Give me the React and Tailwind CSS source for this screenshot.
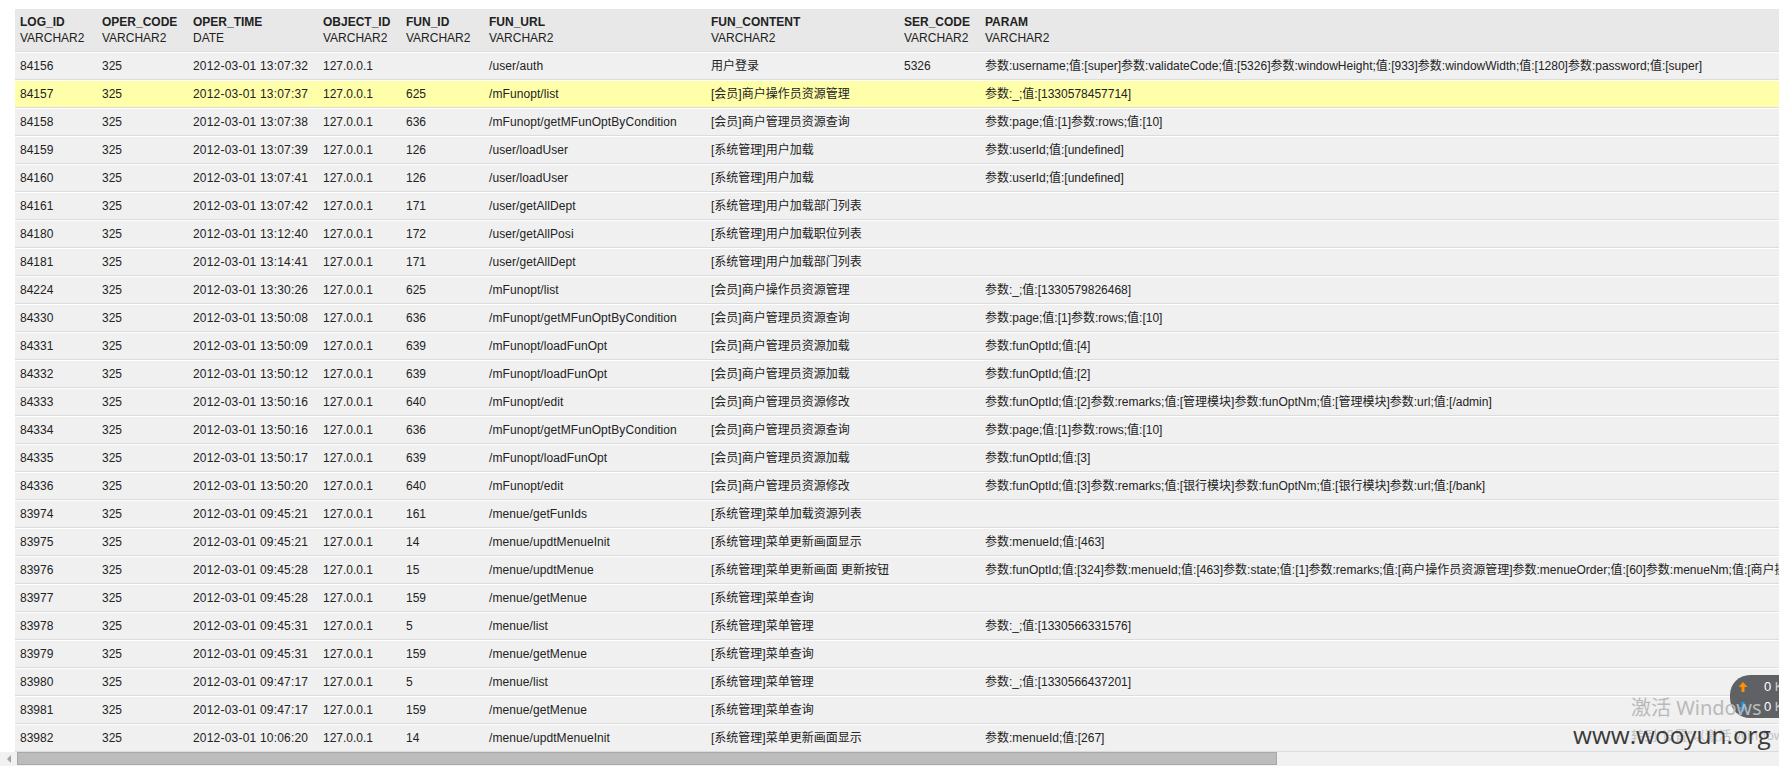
import React from 'react';

const columns = [
  { name: 'LOG_ID', type: 'VARCHAR2', width: 'w-[82px]' },
  { name: 'OPER_CODE', type: 'VARCHAR2', width: 'w-[91px]' },
  { name: 'OPER_TIME', type: 'DATE', width: 'w-[130px]' },
  { name: 'OBJECT_ID', type: 'VARCHAR2', width: 'w-[83px]' },
  { name: 'FUN_ID', type: 'VARCHAR2', width: 'w-[83px]' },
  { name: 'FUN_URL', type: 'VARCHAR2', width: 'w-[222px]' },
  { name: 'FUN_CONTENT', type: 'VARCHAR2', width: 'w-[193px]' },
  { name: 'SER_CODE', type: 'VARCHAR2', width: 'w-[81px]' },
  { name: 'PARAM', type: 'VARCHAR2', width: 'w-[1000px]' },
];

const rows = [
  ['84156', '325', '2012-03-01 13:07:32', '127.0.0.1', '', '/user/auth', '用户登录', '5326', '参数:username;值:[super]参数:validateCode;值:[5326]参数:windowHeight;值:[933]参数:windowWidth;值:[1280]参数:password;值:[super]'],
  ['84157', '325', '2012-03-01 13:07:37', '127.0.0.1', '625', '/mFunopt/list', '[会员]商户操作员资源管理', '', '参数:_;值:[1330578457714]'],
  ['84158', '325', '2012-03-01 13:07:38', '127.0.0.1', '636', '/mFunopt/getMFunOptByCondition', '[会员]商户管理员资源查询', '', '参数:page;值:[1]参数:rows;值:[10]'],
  ['84159', '325', '2012-03-01 13:07:39', '127.0.0.1', '126', '/user/loadUser', '[系统管理]用户加载', '', '参数:userId;值:[undefined]'],
  ['84160', '325', '2012-03-01 13:07:41', '127.0.0.1', '126', '/user/loadUser', '[系统管理]用户加载', '', '参数:userId;值:[undefined]'],
  ['84161', '325', '2012-03-01 13:07:42', '127.0.0.1', '171', '/user/getAllDept', '[系统管理]用户加载部门列表', '', ''],
  ['84180', '325', '2012-03-01 13:12:40', '127.0.0.1', '172', '/user/getAllPosi', '[系统管理]用户加载职位列表', '', ''],
  ['84181', '325', '2012-03-01 13:14:41', '127.0.0.1', '171', '/user/getAllDept', '[系统管理]用户加载部门列表', '', ''],
  ['84224', '325', '2012-03-01 13:30:26', '127.0.0.1', '625', '/mFunopt/list', '[会员]商户操作员资源管理', '', '参数:_;值:[1330579826468]'],
  ['84330', '325', '2012-03-01 13:50:08', '127.0.0.1', '636', '/mFunopt/getMFunOptByCondition', '[会员]商户管理员资源查询', '', '参数:page;值:[1]参数:rows;值:[10]'],
  ['84331', '325', '2012-03-01 13:50:09', '127.0.0.1', '639', '/mFunopt/loadFunOpt', '[会员]商户管理员资源加载', '', '参数:funOptId;值:[4]'],
  ['84332', '325', '2012-03-01 13:50:12', '127.0.0.1', '639', '/mFunopt/loadFunOpt', '[会员]商户管理员资源加载', '', '参数:funOptId;值:[2]'],
  ['84333', '325', '2012-03-01 13:50:16', '127.0.0.1', '640', '/mFunopt/edit', '[会员]商户管理员资源修改', '', '参数:funOptId;值:[2]参数:remarks;值:[管理模块]参数:funOptNm;值:[管理模块]参数:url;值:[/admin]'],
  ['84334', '325', '2012-03-01 13:50:16', '127.0.0.1', '636', '/mFunopt/getMFunOptByCondition', '[会员]商户管理员资源查询', '', '参数:page;值:[1]参数:rows;值:[10]'],
  ['84335', '325', '2012-03-01 13:50:17', '127.0.0.1', '639', '/mFunopt/loadFunOpt', '[会员]商户管理员资源加载', '', '参数:funOptId;值:[3]'],
  ['84336', '325', '2012-03-01 13:50:20', '127.0.0.1', '640', '/mFunopt/edit', '[会员]商户管理员资源修改', '', '参数:funOptId;值:[3]参数:remarks;值:[银行模块]参数:funOptNm;值:[银行模块]参数:url;值:[/bank]'],
  ['83974', '325', '2012-03-01 09:45:21', '127.0.0.1', '161', '/menue/getFunIds', '[系统管理]菜单加载资源列表', '', ''],
  ['83975', '325', '2012-03-01 09:45:21', '127.0.0.1', '14', '/menue/updtMenueInit', '[系统管理]菜单更新画面显示', '', '参数:menueId;值:[463]'],
  ['83976', '325', '2012-03-01 09:45:28', '127.0.0.1', '15', '/menue/updtMenue', '[系统管理]菜单更新画面 更新按钮', '', '参数:funOptId;值:[324]参数:menueId;值:[463]参数:state;值:[1]参数:remarks;值:[商户操作员资源管理]参数:menueOrder;值:[60]参数:menueNm;值:[商户操作员资源管理]'],
  ['83977', '325', '2012-03-01 09:45:28', '127.0.0.1', '159', '/menue/getMenue', '[系统管理]菜单查询', '', ''],
  ['83978', '325', '2012-03-01 09:45:31', '127.0.0.1', '5', '/menue/list', '[系统管理]菜单管理', '', '参数:_;值:[1330566331576]'],
  ['83979', '325', '2012-03-01 09:45:31', '127.0.0.1', '159', '/menue/getMenue', '[系统管理]菜单查询', '', ''],
  ['83980', '325', '2012-03-01 09:47:17', '127.0.0.1', '5', '/menue/list', '[系统管理]菜单管理', '', '参数:_;值:[1330566437201]'],
  ['83981', '325', '2012-03-01 09:47:17', '127.0.0.1', '159', '/menue/getMenue', '[系统管理]菜单查询', '', ''],
  ['83982', '325', '2012-03-01 10:06:20', '127.0.0.1', '14', '/menue/updtMenueInit', '[系统管理]菜单更新画面显示', '', '参数:menueId;值:[267]'],
];

const font = "font-['Liberation_Sans','Noto_Sans_CJK_SC',sans-serif]";

// hinted digits in the shot run a little wider than Liberation's
const cellTracking = { 2: 'tracking-[0.2px]', 5: 'tracking-[0.08px]' };

const SpeedArrow = ({ up, className }) => (
  <svg width="10" height="12" viewBox="0 0 10 12" className={className}>
    <path d={up ? 'M5 1 L9.5 6 L6.5 6 L6.5 11 L3.5 11 L3.5 6 L0.5 6 Z' : 'M5 11 L9.5 6 L6.5 6 L6.5 1 L3.5 1 L3.5 6 L0.5 6 Z'} fill="currentColor" />
  </svg>
);

const App = () => {
  return (
    <div className={`relative flex h-screen w-full flex-col overflow-hidden bg-white text-xs text-[#222] ${font}`}>
      {/* Table */}
      <div className="min-h-0 flex-1 overflow-hidden pl-[15px] pt-[9px]">
        <table className="w-[1965px] table-fixed border-collapse">
          <colgroup>
            {columns.map((col) => (
              <col key={col.name} className={col.width} />
            ))}
          </colgroup>
          <thead>
            <tr className="h-[43px] border-b border-b-white bg-[#e8e8e8]">
              {columns.map((col) => (
                <th key={col.name} className="whitespace-nowrap pl-[5px] text-left font-normal leading-4 shadow-[inset_0_-1px_0_#dcdcdc]">
                  <div className="font-bold">{col.name}</div>
                  <div>{col.type}</div>
                </th>
              ))}
            </tr>
          </thead>
          <tbody>
            {rows.map((row, i) => (
              <tr
                key={row[0]}
                className={`h-[28px] border-b border-b-white ${i === 1 ? 'bg-[#ffffaa]' : 'bg-[#f0f0f0]'}`}
              >
                {row.map((cell, j) => (
                  <td key={j} className={`overflow-hidden whitespace-nowrap pl-[5px] leading-4 shadow-[inset_0_-1px_0_#dcdcdc] ${cellTracking[j] || ''}`}>
                    {cell}
                  </td>
                ))}
              </tr>
            ))}
          </tbody>
        </table>
      </div>

      {/* Scrollbar */}
      <div className="flex h-[14px] shrink-0 items-stretch bg-[#f1f1f1] pb-px">
        <div className="flex w-[17px] items-center justify-center">
          <div className="h-0 w-0 border-y-4 border-r-4 border-y-transparent border-r-[#a3a3a3]" />
        </div>
        <div className="w-[1260px] border border-[#a8a8a8] bg-[#bcbcbc]" />
      </div>

      {/* Net speed widget */}
      <div className="absolute left-[1730px] top-[675px] flex h-[43px] w-[60px] flex-col justify-center gap-[4px] rounded-l-[20px] bg-[#5f6165] pl-[8px] text-[13px] leading-4 text-white">
        <div className="flex items-center">
          <SpeedArrow up className="mr-[16px] text-[#ff9000]" />
          <span>0 <span className="text-[#cfcfcf]">K</span></span>
        </div>
        <div className="flex items-center">
          <SpeedArrow className="mr-[16px] text-[#1e9bff]" />
          <span>0 <span className="text-[#cfcfcf]">K</span></span>
        </div>
      </div>

      {/* Watermarks */}
      <div className="absolute left-[1631px] top-[696px] whitespace-nowrap font-['Noto_Sans','Noto_Sans_CJK_SC',sans-serif] text-[20px] leading-6 text-[#b9b9b9]">激活 Windows</div>
      <div className="absolute left-[1631px] top-[727px] whitespace-nowrap font-['Noto_Sans','Noto_Sans_CJK_SC',sans-serif] text-[13px] leading-4 text-[#c4c4c4]">转到“设置”以激活 Windows</div>
      <div className="absolute left-[1573px] top-[719px] whitespace-nowrap font-['Open_Sans',sans-serif] text-[24.4px] leading-8 text-[#3a3a3a]">www.wooyun.org</div>
    </div>
  );
};

export default App;
